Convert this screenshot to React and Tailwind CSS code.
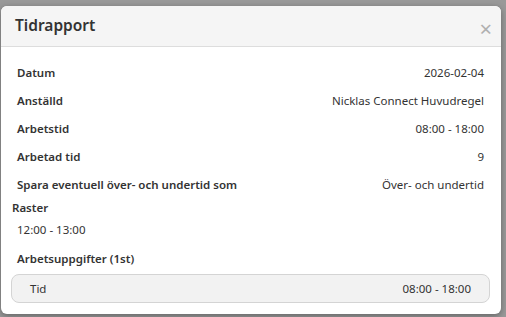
import React from 'react';

const rows = [
  { label: 'Datum', value: '2026-02-04' },
  { label: 'Anställd', value: 'Nicklas Connect Huvudregel' },
  { label: 'Arbetstid', value: '08:00 - 18:00' },
  { label: 'Arbetad tid', value: '9' },
  { label: 'Spara eventuell över- och undertid som', value: 'Över- och undertid' },
];

const App = () => {
  return (
    <div
      className="w-[506px] h-[317px] bg-[#999999] flex overflow-hidden pt-[6px] pl-[1px] text-[#333333]"
      style={{ fontFamily: '"Noto Sans", "Open Sans", sans-serif' }}
    >
      <div className="w-[500px] h-[308px] shrink-0 bg-white rounded-[6px] overflow-hidden shadow-[0_2px_6px_rgba(0,0,0,0.35)] flex flex-col">
        <div className="h-[41px] shrink-0 bg-[#f5f5f5] border-b border-[#dddddd] flex items-center justify-between pl-[14px] pr-[9px]">
          <h2 className="text-[15.5px] font-semibold text-[#333333] leading-none">Tidrapport</h2>
          <span className="text-[22px] leading-none text-[#b0b0b0] mt-[4px]">×</span>
        </div>
        <div className="flex flex-col pt-[12px]">
          {rows.map((r) => (
            <div key={r.label} className="h-[28px] flex items-center justify-between pl-[16px] pr-[17px] text-[11.5px]">
              <span className="font-semibold">{r.label}</span>
              <span>{r.value}</span>
            </div>
          ))}
          <div className="h-[18px] flex items-center pl-[11px] text-[11.5px] font-semibold">Raster</div>
          <div className="h-[26px] flex items-center pl-[16px] text-[11.5px]">12:00 - 13:00</div>
          <div className="h-[31px] flex items-center pl-[16px] text-[11.5px] font-semibold">Arbetsuppgifter (1st)</div>
          <div className="mx-[10px] w-[479px] h-[29px] rounded-[8px] border border-[#d4d4d4] bg-[#f2f2f2] flex items-center justify-between pl-[18px] pr-[18px] text-[11.5px]">
            <span>Tid</span>
            <span>08:00 - 18:00</span>
          </div>
        </div>
      </div>
    </div>
  );
};

export default App;
